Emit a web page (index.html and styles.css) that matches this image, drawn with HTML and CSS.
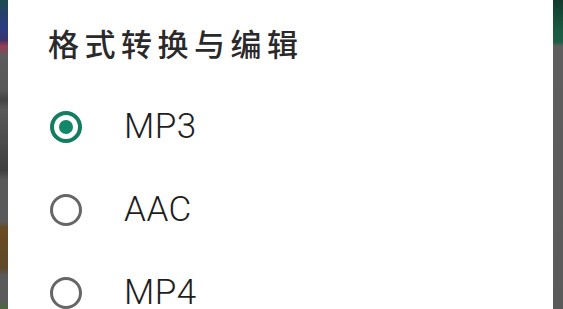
FILE: index.html
```html
<!DOCTYPE html>
<html lang="zh">
<head>
<meta charset="utf-8">
<link rel="stylesheet" href="styles.css">
</head>
<body>
<div class="screen">
  <div class="edge edge-left"></div>
  <div class="dialog">
    <div class="title">格式转换与编辑</div>
    <div class="options">
      <div class="option">
        <span class="radio checked"><span class="dot"></span></span>
        <span class="label">MP3</span>
      </div>
      <div class="option">
        <span class="radio"></span>
        <span class="label">AAC</span>
      </div>
      <div class="option">
        <span class="radio"></span>
        <span class="label">MP4</span>
      </div>
    </div>
  </div>
  <div class="edge edge-right"></div>
</div>
</body>
</html>
```
FILE: styles.css
```css
html, body {
  margin: 0;
  padding: 0;
  background: #ffffff;
}
.screen {
  display: flex;
  width: 563px;
  height: 309px;
  overflow: hidden;
}
.edge {
  flex: none;
  height: 100%;
}
.edge-left {
  width: 8px;
  background: linear-gradient(to bottom,
    #1d4a4e 0px, #24406a 14px, #2c3a86 30px, #3a3468 40px,
    #9a3a55 46px, #5c5c5c 56px, #575757 90px, #444 100px,
    #5a5a5a 110px, #3e3e3e 170px, #5a5a5a 180px, #5a5a5a 222px,
    #6a4a22 228px, #5e4a2a 268px, #5a5a5a 276px, #5a5a5a 300px, #4a6a3a 309px);
}
.edge-right {
  width: 10px;
  background: linear-gradient(to bottom,
    #133a2e 0px, #1b5a42 30px, #1d5e46 42px, #5e5e5e 46px, #5a5a5a 309px);
}
.dialog {
  flex: 1;
  background: #ffffff;
  display: flex;
  flex-direction: column;
  font-family: "Noto Sans CJK SC", "Noto Sans", sans-serif;
}
.title {
  padding: 27px 0 0 40px;
  height: 32px;
  font-size: 31px;
  font-weight: 500;
  line-height: 32px;
  letter-spacing: 5.5px;
  color: #2a2a2a;
}
.options {
  margin-top: 26px;
  display: flex;
  flex-direction: column;
}
.option {
  height: 83px;
  display: flex;
  align-items: center;
  padding-left: 42px;
  gap: 42px;
}
.radio {
  box-sizing: border-box;
  width: 32px;
  height: 32px;
  border-radius: 50%;
  border: 3px solid #666666;
  display: flex;
  align-items: center;
  justify-content: center;
  flex: none;
}
.radio.checked {
  border: 4px solid #137d62;
}
.dot {
  width: 14px;
  height: 14px;
  border-radius: 50%;
  background: #13876a;
}
.label {
  font-family: "Roboto", "Liberation Sans", sans-serif;
  font-weight: 300;
  font-size: 35px;
  line-height: 28px;
  color: #1e1e1e;
  letter-spacing: 0.5px;
}
```
